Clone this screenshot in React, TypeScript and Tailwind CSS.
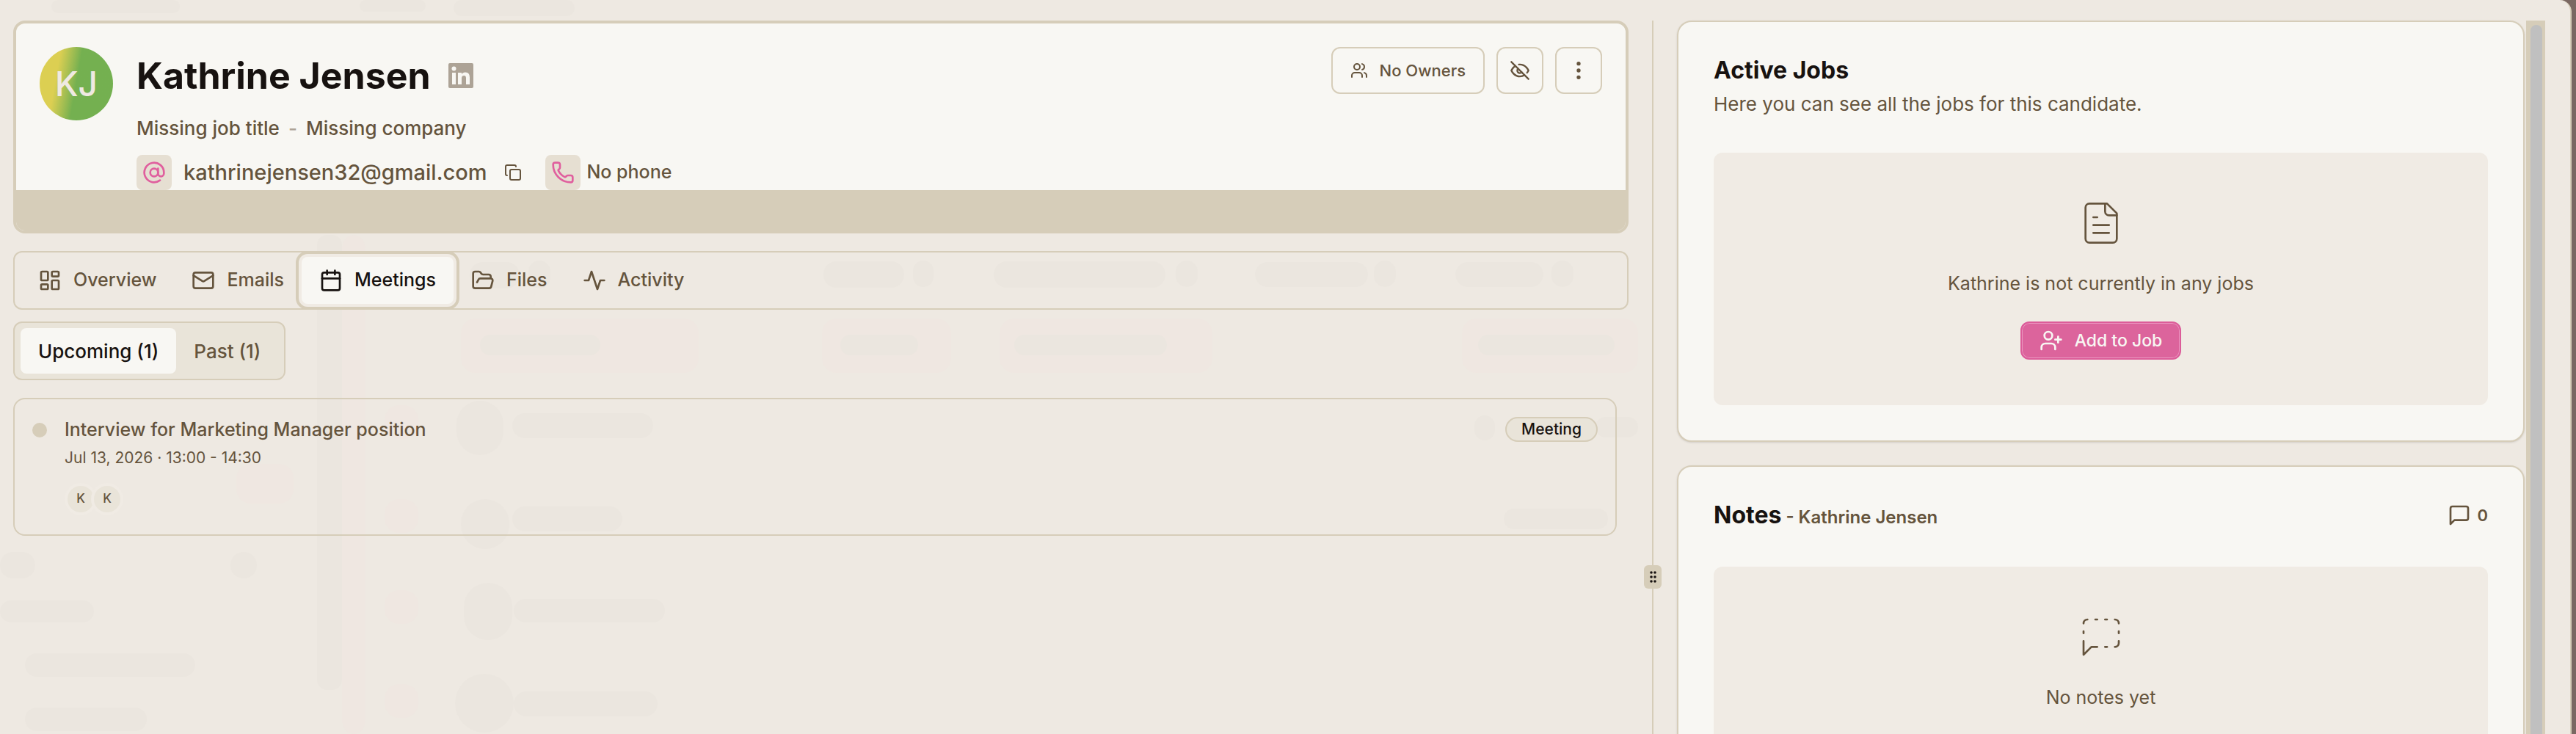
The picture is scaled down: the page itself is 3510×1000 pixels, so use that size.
import type { ReactNode } from 'react';
import {
  AtSign,
  Calendar,
  Copy,
  EllipsisVertical,
  FolderOpen,
  LayoutDashboard,
  Mail,
  Phone,
  UserPlus,
  Users,
} from 'lucide-react';

interface LineIconProps {
  size: number;
  strokeWidth?: number;
  paths: string[];
}

function LineIcon({ size, strokeWidth = 2, paths }: LineIconProps) {
  return (
    <svg
      width={size}
      height={size}
      viewBox="0 0 24 24"
      fill="none"
      stroke="currentColor"
      strokeWidth={strokeWidth}
      strokeLinecap="round"
      strokeLinejoin="round"
      aria-hidden="true"
    >
      {paths.map((d) => (
        <path key={d} d={d} />
      ))}
    </svg>
  );
}

const activityPaths = ['M22 12h-4l-3 9L9 3l-3 9H2'];

const eyeOffPaths = [
  'M9.880 9.880a3 3 0 1 0 4.240 4.240',
  'M10.730 5.080A10.430 10.430 0 0 1 12 5c7 0 10 7 10 7a13.160 13.160 0 0 1-1.670 2.680',
  'M6.610 6.610A13.526 13.526 0 0 0 2 12s3 7 10 7a9.740 9.740 0 0 0 5.390-1.610',
  'M2 2l20 20',
];

const filePaths = [
  'M15 2H6a2 2 0 0 0-2 2v16a2 2 0 0 0 2 2h12a2 2 0 0 0 2-2V7Z',
  'M14 2v4a2 2 0 0 0 2 2h4',
  'M10 9H8',
  'M16 13H8',
  'M16 17H8',
];

const messagePaths = ['M21 15a2 2 0 0 1-2 2H7l-4 4V5a2 2 0 0 1 2-2h14a2 2 0 0 1 2 2z'];

const messageDashedPaths = [
  'M10 17H7l-4 4v-7',
  'M14 17h1',
  'M14 3h1',
  'M19 3a2 2 0 0 1 2 2',
  'M21 14v1a2 2 0 0 1-2 2',
  'M21 9v1',
  'M3 9v1',
  'M5 3a2 2 0 0 0-2 2',
  'M9 3h1',
];

const tabs: { label: string; icon: ReactNode; active?: boolean }[] = [
  { label: 'Overview', icon: <LayoutDashboard size={32} /> },
  { label: 'Emails', icon: <Mail size={32} /> },
  { label: 'Meetings', icon: <Calendar size={32} />, active: true },
  { label: 'Files', icon: <FolderOpen size={32} /> },
  { label: 'Activity', icon: <LineIcon size={32} paths={activityPaths} /> },
];

const shadows = [
  [70, 0, 175, 18],
  [490, 0, 90, 16],
  [618, 0, 165, 22],
  [0, 752, 48, 36],
  [0, 818, 128, 30],
  [34, 890, 232, 32],
  [34, 964, 166, 32],
  [314, 752, 36, 36],
  [640, 357, 68, 36],
  [720, 355, 30, 38],
  [1122, 356, 110, 36],
  [1244, 355, 28, 36],
  [1354, 356, 234, 36],
  [1602, 355, 30, 36],
  [1710, 357, 154, 34],
  [1872, 355, 30, 36],
  [1983, 357, 120, 34],
  [2114, 355, 30, 36],
  [654, 456, 164, 28],
  [1145, 456, 106, 28],
  [1382, 456, 208, 28],
  [2014, 456, 186, 28],
  [622, 546, 64, 74],
  [698, 563, 192, 34],
  [628, 680, 66, 68],
  [698, 690, 150, 34],
  [632, 794, 66, 78],
  [700, 816, 206, 32],
  [620, 918, 80, 80],
  [700, 942, 196, 34],
  [2009, 566, 28, 34],
  [2049, 693, 142, 28],
  [2174, 568, 58, 28],
];

const glows = [
  [466, 320, 32, 680],
  [628, 434, 324, 74],
  [1120, 434, 176, 74],
  [1362, 434, 290, 74],
  [1992, 434, 240, 74],
  [524, 552, 46, 46],
  [524, 680, 46, 46],
  [524, 804, 46, 46],
  [524, 932, 46, 46],
  [322, 632, 78, 54],
];

function Backdrop() {
  return (
    <svg className="absolute inset-0 h-full w-full" aria-hidden="true">
      <g fill="#efe7e1">
        {glows.map(([x, y, w, h]) => (
          <rect key={`${x}-${y}`} x={x} y={y} width={w} height={h} rx="20" />
        ))}
      </g>
      <g fill="#ebe6df">
        <rect x="432" y="320" width="34" height="620" rx="14" />
        {shadows.map(([x, y, w, h]) => (
          <rect key={`${x}-${y}`} x={x} y={y} width={w} height={h} rx={Math.min(w, h) / 2} />
        ))}
      </g>
    </svg>
  );
}

function CandidateHeader() {
  return (
    <header className="overflow-hidden rounded-2xl border-4 border-[#d6cdb9] bg-[#f8f7f3]">
      <div className="flex items-start gap-8 pt-8 pr-8 pl-8">
        <div className="flex h-[100px] w-[100px] shrink-0 items-center justify-center rounded-full bg-linear-100 from-[#dccf52] from-25% to-[#74b050] to-50% text-[46px] font-medium text-[#efe9e2]">
          KJ
        </div>
        <div className="flex-1">
          <div className="flex h-[78px] items-center gap-6">
            <h1 className="text-[50px] font-bold text-[#171210]">Kathrine Jensen</h1>
            <a href="#linkedin" aria-label="LinkedIn">
              <svg viewBox="0 0 34 34" className="h-[34px] w-[34px]">
                <rect width="34" height="34" rx="2" fill="#ada396" />
                <rect x="5" y="13" width="5" height="16" fill="#f8f7f3" />
                <circle cx="7.5" cy="7.5" r="3" fill="#f8f7f3" />
                <path
                  d="M13 13h5v2.300c1-1.700 2.700-2.700 5-2.700 4.500 0 6 2.900 6 7.200V29h-5v-8.200c0-2.200-.5-3.900-2.800-3.900-2.300 0-3.200 1.600-3.200 3.900V29h-5z"
                  fill="#f8f7f3"
                />
              </svg>
            </a>
          </div>
          <div className="flex h-16 items-center gap-3 text-[26px] font-medium">
            <span>Missing job title</span>
            <span className="text-[#ada396]">-</span>
            <span>Missing company</span>
          </div>
          <div className="mt-[5px] flex items-center">
            <span className="flex h-12 w-12 items-center justify-center rounded-lg bg-[#e6dfd2] text-[#e05f9e]">
              <AtSign size={32} />
            </span>
            <a href="mailto:kathrinejensen32@gmail.com" className="ml-4 text-[29px] font-medium">
              kathrinejensen32@gmail.com
            </a>
            <button aria-label="Copy email" className="ml-6">
              <Copy size={24} />
            </button>
            <span className="ml-8 flex h-12 w-12 items-center justify-center rounded-lg bg-[#e6dfd2] text-[#e05f9e]">
              <Phone size={32} />
            </span>
            <span className="ml-2 text-[25px] font-medium">No phone</span>
          </div>
        </div>
        <div className="flex gap-4">
          <button className="flex h-16 items-center gap-4 rounded-xl border-2 border-[#d6cdb9] px-6 text-[22px] font-medium">
            <Users size={24} />
            No Owners
          </button>
          <button
            aria-label="Hide candidate"
            className="flex h-16 w-16 items-center justify-center rounded-xl border-2 border-[#d6cdb9]"
          >
            <LineIcon size={28} paths={eyeOffPaths} />
          </button>
          <button
            aria-label="More actions"
            className="flex h-16 w-16 items-center justify-center rounded-xl border-2 border-[#d6cdb9]"
          >
            <EllipsisVertical size={32} />
          </button>
        </div>
      </div>
      <div className="h-[55px] bg-[#d6cdb9]" />
    </header>
  );
}

function TabBar() {
  return (
    <nav className="mt-6 flex h-20 items-center rounded-xl border-2 border-[#d6cdb9] pl-2">
      {tabs.map(({ label, icon, active }) => (
        <button
          key={label}
          className={
            active
              ? 'flex h-16 items-center gap-4 rounded-lg bg-[#f8f7f3] px-6 text-[25px] font-medium text-[#171210] ring-4 ring-[#f0ebe4] outline-4 outline-offset-4 outline-[#d6cdb9]'
              : 'flex h-16 items-center gap-4 px-6 text-[25px] font-medium'
          }
        >
          {icon}
          {label}
        </button>
      ))}
    </nav>
  );
}

function MeetingCard() {
  return (
    <article className="mt-6 mr-4 flex items-start rounded-2xl border-2 border-[#d6cdb9] px-6 pt-5 pb-[26px]">
      <span className="mt-3 mr-6 h-5 w-5 rounded-full bg-[#d6cdb9]" />
      <div className="flex-1">
        <h2 className="text-[25px] leading-[42px] font-medium">Interview for Marketing Manager position</h2>
        <p className="text-[21px] leading-9">Jul 13, 2026 · 13:00 - 14:30</p>
        <div className="mt-4 flex">
          {['first', 'second'].map((id) => (
            <span
              key={id}
              className="-mr-2 flex h-11 w-11 items-center justify-center rounded-full border-4 border-[#f0ebe4] bg-[#e9e4d9] text-[17px] font-medium"
            >
              K
            </span>
          ))}
        </div>
      </div>
      <span className="mt-1 flex h-[34px] items-center rounded-full border-2 border-[#d6cdb9] bg-[#e9e4d9] px-5 text-[21px] font-medium text-[#171210]">
        Meeting
      </span>
    </article>
  );
}

interface PanelProps {
  header: ReactNode;
  children: ReactNode;
}

function Panel({ header, children }: PanelProps) {
  return (
    <section className="shrink-0 rounded-[20px] border-2 border-[#d6cdb9] bg-[#f8f7f3] px-12 pb-12 shadow-sm">
      {header}
      <div className="flex h-[344px] flex-col items-center rounded-xl bg-[#f0ebe4] pt-16">{children}</div>
    </section>
  );
}

export default function App() {
  return (
    <div className="h-screen overflow-hidden bg-[#7a6862] pr-[6px] font-['Inter',sans-serif] text-[#65543d]">
      <div className="relative flex h-full overflow-hidden rounded-tr-2xl border-r-2 border-[#d6cdb9] bg-[#eee9e2] pt-7 pl-[18px]">
        <Backdrop />
        <main className="relative min-w-0 flex-[2201]">
          <CandidateHeader />
          <TabBar />
          <div className="mt-4 flex h-20 w-fit items-center rounded-xl border-2 border-[#d6cdb9] bg-[#e9e4d9] px-2 text-[26px] font-medium">
            <button className="h-[62px] rounded-lg bg-[#f8f7f3] px-6 text-[#171210]">Upcoming (1)</button>
            <button className="h-[62px] px-6">Past (1)</button>
          </div>
          <MeetingCard />
        </main>

        <div className="relative mx-8 w-[2px] bg-[#d6cdb9]">
          <button
            aria-label="Resize panels"
            className="absolute top-[742px] -left-[11px] flex h-8 w-6 items-center justify-center rounded-md bg-[#d6cdb9]"
          >
            <svg viewBox="0 0 9 16" className="h-4 w-[9px]" fill="#171210">
              <circle cx="2" cy="2" r="1.800" />
              <circle cx="7" cy="2" r="1.800" />
              <circle cx="2" cy="8" r="1.800" />
              <circle cx="7" cy="8" r="1.800" />
              <circle cx="2" cy="14" r="1.800" />
              <circle cx="7" cy="14" r="1.800" />
            </svg>
          </button>
        </div>

        <aside className="relative flex min-w-0 flex-[1155] flex-col gap-8">
          <Panel
            header={
              <div className="pt-10 pb-[46px]">
                <h2 className="text-[32px] leading-[52px] font-bold text-[#171210]">Active Jobs</h2>
                <p className="text-[26px] leading-10">Here you can see all the jobs for this candidate.</p>
              </div>
            }
          >
            <LineIcon size={64} strokeWidth={1} paths={filePaths} />
            <p className="mt-[30px] text-[25px] leading-10">Kathrine is not currently in any jobs</p>
            <button className="mt-8 flex h-[52px] items-center gap-4 rounded-xl border-2 border-[#dc5c99] bg-[#dc649c] px-6 text-[23px] font-medium text-[#f8f7f3] inset-ring-1 inset-ring-[#ea94bf]">
              <UserPlus size={32} />
              Add to Job
            </button>
          </Panel>
          <Panel
            header={
              <div className="flex h-[136px] items-center justify-between pb-1">
                <h2 className="text-[32px] font-bold text-[#171210]">
                  Notes<span className="ml-[6px] text-[24px] font-semibold text-[#65543d]">- Kathrine Jensen</span>
                </h2>
                <span className="flex items-center gap-2 text-[22px] font-semibold">
                  <LineIcon size={32} paths={messagePaths} />0
                </span>
              </div>
            }
          >
            <LineIcon size={64} strokeWidth={1} paths={messageDashedPaths} />
            <p className="mt-[30px] text-[25px] leading-10">No notes yet</p>
          </Panel>
        </aside>

        <div className="relative mr-[34px] ml-[2px] w-[26px] bg-[#d6cdb9] pt-[6px] pr-1 pl-[6px]">
          <div className="h-full rounded-t-full bg-[#c0c0c0]" />
        </div>
      </div>
    </div>
  );
}
